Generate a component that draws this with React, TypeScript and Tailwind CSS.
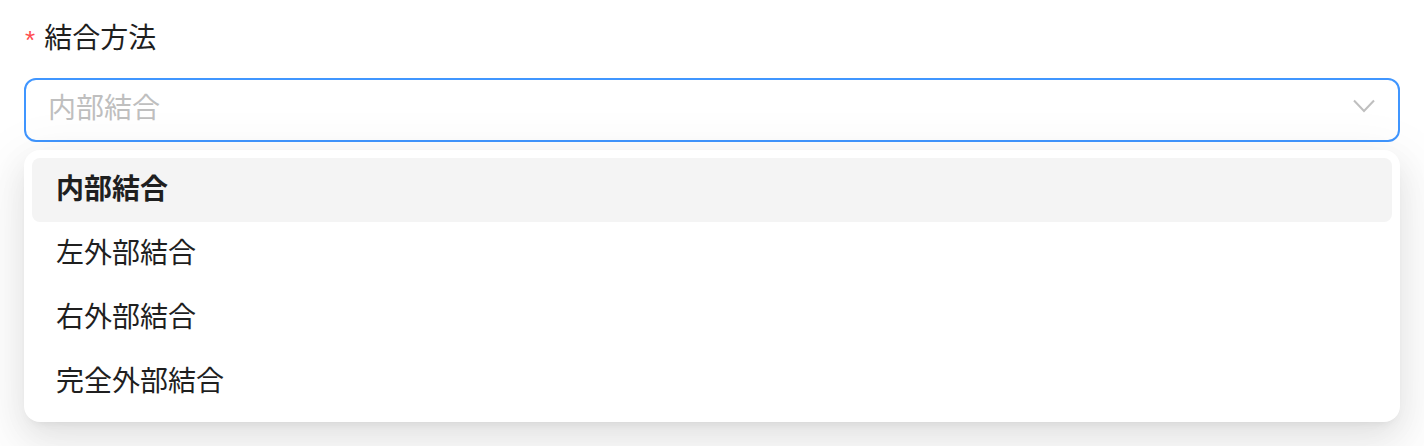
import React, { useState } from 'react';

const options = ['内部結合', '左外部結合', '右外部結合', '完全外部結合'];

export default function App() {
  const [selected, setSelected] = useState(0);

  return (
    <div
      className="min-h-[446px] bg-white px-[24px] pt-[16px]"
      style={{ fontFamily: '"Noto Sans CJK JP", "Noto Sans", sans-serif' }}
    >
      {/* Label */}
      <div className="flex items-center h-[44px] mb-[18px] text-[28px] text-[#1f1f1f] pb-[4px]">
        <span className="text-[#ff4d4f] text-[26px] ml-[1px] mr-[9px] mt-[8px] leading-none font-['Liberation_Sans',sans-serif]">*</span>
        <span className="leading-[40px]">結合方法</span>
      </div>

      <div className="relative">
        {/* Select trigger */}
        <div className="flex items-center h-[64px] rounded-[12px] border-2 border-[#4096ff] bg-white pl-[22px] pr-[23px]">
          <span className="flex-1 text-[28px] leading-[40px] text-[#bfbfbf] pb-[8px]">{options[selected]}</span>
          <svg width="22" height="14" viewBox="0 0 22 14" fill="none" className="mb-[8px]">
            <polyline points="1,1.5 11,12 21,1.5" stroke="#bfbfbf" strokeWidth="2" />
          </svg>
        </div>

        {/* Dropdown */}
        <div className="absolute left-0 right-0 top-[72px] z-10 rounded-[16px] bg-white p-[8px] shadow-[0_12px_32px_0_rgba(0,0,0,0.08),0_6px_12px_-8px_rgba(0,0,0,0.12),0_18px_56px_16px_rgba(0,0,0,0.05)]">
          {options.map((opt, i) => (
            <div
              key={opt}
              onClick={() => setSelected(i)}
              className={
                i === selected
                  ? 'flex items-center h-[64px] px-[24px] pb-[6px] rounded-[8px] bg-[#f4f4f4] text-[28px] leading-[40px] font-bold text-[#1f1f1f]'
                  : 'flex items-center h-[64px] px-[24px] pb-[6px] rounded-[8px] text-[28px] leading-[40px] text-[#1f1f1f]'
              }
            >
              {opt}
            </div>
          ))}
        </div>
      </div>
    </div>
  );
}
